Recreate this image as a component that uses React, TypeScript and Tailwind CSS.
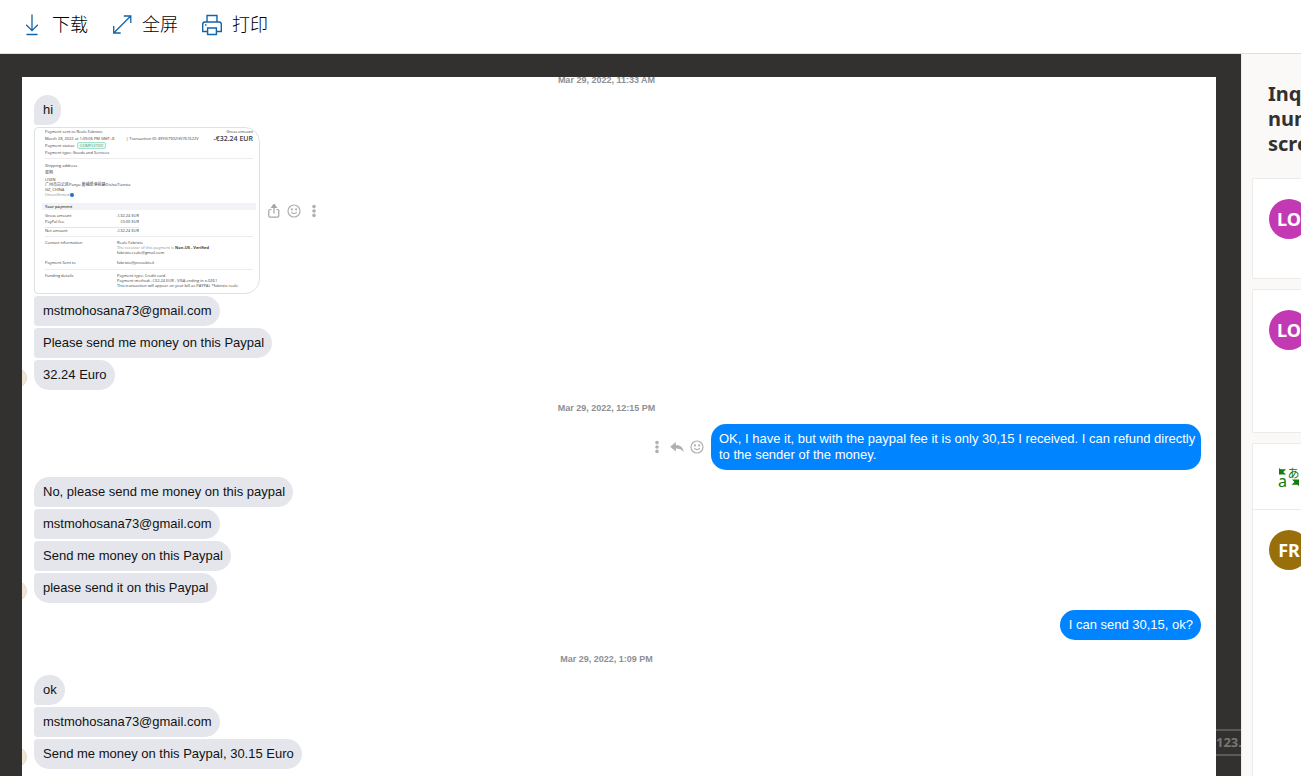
import type { ReactNode } from "react";
import { clsx } from "clsx";

type Position = "first" | "middle" | "last";

const DownloadIcon = () => (
  <svg className="h-6 w-6" viewBox="0 0 24 24" fill="none" stroke="#1264a8" strokeWidth="1.3">
    <path d="M12 2.5v16M6.2 12.8l5.8 5.8 5.8-5.8M6.5 22.5h11" />
  </svg>
);

const FullScreenIcon = () => (
  <svg className="h-6 w-6" viewBox="0 0 24 24" fill="none" stroke="#1264a8" strokeWidth="1.3">
    <path d="M4 20.7 20.5 4.2M13.8 4h7v7M3.7 14v7h7" />
  </svg>
);

const PrintIcon = () => (
  <svg className="h-6 w-6" viewBox="0 0 24 24" fill="none" stroke="#1264a8" strokeWidth="1.4">
    <path d="M7 10V3.5h10V10M7 19.5H2.7v-7.3Q2.7 10 4.9 10h14.2q2.2 0 2.2 2.2v7.3H17M7.6 16h8.8v6.5H7.6z" />
    <path d="M5 13h1.4" />
  </svg>
);

const SmileIcon = () => (
  <svg className="h-[14px] w-[14px]" viewBox="0 0 14 14" fill="none" stroke="#b0b0b2" strokeWidth="1.2">
    <circle cx="7" cy="7" r="6" />
    <path d="M4.2 8.2q2.8 3 5.6 0" />
    <circle cx="4.9" cy="5.4" r=".5" fill="#b0b0b2" />
    <circle cx="9.1" cy="5.4" r=".5" fill="#b0b0b2" />
  </svg>
);

const DotsIcon = () => (
  <svg className="h-[14px] w-[14px]" viewBox="0 0 14 14" fill="#b0b0b2">
    <circle cx="7" cy="2.6" r="1.8" />
    <circle cx="7" cy="7" r="1.8" />
    <circle cx="7" cy="11.4" r="1.8" />
  </svg>
);

const ShareIcon = () => (
  <svg className="h-[14px] w-[14px]" viewBox="0 0 14 14" fill="none" stroke="#a5a5a8" strokeWidth="1.2">
    <path d="M4.5 5.5H3q-1.2 0-1.2 1.2V12q0 1.2 1.2 1.2h7.6q1.2 0 1.2-1.2V6.7q0-1.2-1.2-1.2H9.5M7 9.5V2" />
    <path d="M7 .2 9.2 3.4H4.8z" fill="#a5a5a8" />
  </svg>
);

const ReplyIcon = () => (
  <svg className="h-[14px] w-[14px]" viewBox="0 0 14 14" fill="#b0b0b2">
    <path d="M5.8 2v3c5 .2 7.6 2.8 8 7.2-1.9-2.7-4.3-3.6-8-3.6v3L.2 6.8z" />
  </svg>
);

const TranslateIcon = () => (
  <svg className="h-6 w-6" viewBox="0 0 24 24" fill="#107c10">
    <text x="1" y="21.5" fontSize="16" fontFamily="Noto Sans, sans-serif">a</text>
    <text x="10.5" y="12.5" fontSize="12" fontFamily="Noto Sans CJK JP, sans-serif">あ</text>
    <path d="M2 3l1.6 1.3H9L6.3 7 9 9.5H2z" />
    <path d="M22 21l-1.6-1.3H14.5l3-2.7-2.5-2.5h7z" />
  </svg>
);

const ToolbarButton = ({ icon, label }: { icon: ReactNode; label: string }) => (
  <button className="flex items-center gap-2 text-lg leading-6 font-light text-black">
    {icon}
    {label}
  </button>
);

const DateLine = ({ children }: { children: ReactNode }) => (
  <p className="pr-[22px] text-center text-[9px] leading-4 font-bold text-[#8d9095]">{children}</p>
);

const Bubble = ({ position, children }: { position: Position; children: ReactNode }) => (
  <p
    className={clsx(
      "w-fit rounded-[15px] bg-[#e4e6eb] pr-2 pl-[9px] text-[13px] leading-[30px] text-[#111315]",
      position !== "first" && "rounded-tl-[4px]",
      position !== "last" && "rounded-bl-[4px]"
    )}
  >
    {children}
  </p>
);

const ReceivedGroup = ({ children }: { children: ReactNode }) => (
  <div className="relative flex flex-col gap-[2px]">
    {children}
    <span className="absolute bottom-[2px] -left-[27px] h-5 w-5 rounded-full border border-[#e3d9c8] bg-[#efe6d8]" />
  </div>
);

const IconButton = ({ label, children }: { label: string; children: ReactNode }) => (
  <button aria-label={label} title={label}>
    {children}
  </button>
);

const Row = ({ label, children }: { label?: string; children?: ReactNode }) => (
  <div className="flex leading-[5px]">
    <span className="w-[72px]">{label}</span>
    <span>{children}</span>
  </div>
);

const AmountRow = ({ label, amount }: { label: string; amount: string }) => (
  <div className="flex leading-[6px]">
    <span className="w-[60px]">{label}</span>
    <span className="w-[34px] text-right">{amount}</span>
  </div>
);

/* Receipt attached to the conversation, shown as a thumbnail */
const Receipt = () => (
  <div className="w-[226px] overflow-hidden rounded-[15px] rounded-l-[4px] border border-[#e0e1e4] bg-white pr-[6px] pb-[5px] pl-[10px] font-['Open_Sans','Noto_Sans_CJK_SC',sans-serif] text-[4px] whitespace-nowrap text-[#3a3c40]">
    <div className="flex justify-between border-b border-[#ececee] pb-[2px] leading-[7px]">
      <div>
        <p>Payment sent to Reale Fabrizio</p>
        <p className="flex">
          <span className="w-[81px]">March 28, 2022 at 1:09:06 PM GMT+8</span>
          <span>| Transaction ID: 8YH57902HV761622V</span>
        </p>
        <p className="flex items-center">
          Payment status:
          <span className="ml-[2px] rounded-[2px] border border-[#a5e2cb] bg-[#e6f8f0] px-[2px] leading-[5px] text-[#4d9c80]">
            COMPLETED
          </span>
        </p>
        <p>Payment type: Goods and Services</p>
      </div>
      <div className="text-right">
        <p>Gross amount</p>
        <p className="text-[7px] font-semibold">-€32.24 EUR</p>
      </div>
    </div>
    <div className="pt-[3px]">
      <p className="leading-[7px]">Shipping address</p>
      <p className="leading-[7px]">張明</p>
      <div className="pt-px leading-[5px]">
        <p>LISEN</p>
        <p>广州市白云区Panyu 黄埔新港前路DishuiTianxia</p>
        <p>GZ, CHINA</p>
        <p className="flex items-center text-[#8a8d91]">
          Unconfirmed <span className="h-1 w-1 rounded-full bg-[#1872bd]" />
        </p>
      </div>
    </div>
    <p className="-mx-[3px] mt-[6px] bg-[#f2f3f7] px-[3px] leading-[7px] font-semibold">Your payment</p>
    <div className="border-b border-[#ececee] pt-[3px] pb-[2px]">
      <AmountRow label="Gross amount" amount="-€32.24 EUR" />
      <AmountRow label="PayPal fee" amount="€0.00 EUR" />
      <div className="mt-[2px] w-[94px] border-t border-[#e4e4e6]" />
      <AmountRow label="Net amount" amount="-€32.24 EUR" />
    </div>
    <div className="border-b border-[#ececee] pt-[3px] pb-1">
      <Row label="Contact information">Reale Fabrizio</Row>
      <Row>
        <span className="text-[#8a8d91]">The receiver of this payment is</span> <b>Non-US - Verified</b>
      </Row>
      <Row>fabrizio.reale@gmail.com</Row>
      <div className="pt-[5px]">
        <Row label="Payment Sent to">fabrizio@provobis.it</Row>
      </div>
    </div>
    <div className="pt-[3px]">
      <Row label="Funding details">Payment type: Credit card</Row>
      <Row>Payment method: -€32.24 EUR - VISA ending in x-0261</Row>
      <Row>This transaction will appear on your bill as PAYPAL *fabrizio reale</Row>
    </div>
  </div>
);

const Avatar = ({ initials, className }: { initials: string; className: string }) => (
  <span className={clsx("flex h-10 w-10 items-center justify-center rounded-full text-lg font-bold text-white", className)}>
    {initials}
  </span>
);

const Sidebar = () => (
  <aside className="w-[60px] shrink-0 overflow-hidden border-l border-[#edebe9] bg-[#faf9f8]">
    <div className="flex w-[320px] flex-col gap-[10px] pl-[10px]">
      <h2 className="pt-[27px] pb-3 pl-4 text-xl leading-[25px] font-bold text-[#323130]">
        Inq
        <br />
        num
        <br />
        scre
      </h2>
      <section className="h-[101px] rounded-[2px] border border-[#edebe9] bg-white px-4 py-5">
        <Avatar initials="LO" className="bg-[#c239b3]" />
      </section>
      <section className="h-36 rounded-[2px] border border-[#edebe9] bg-white px-4 py-5">
        <Avatar initials="LO" className="bg-[#c239b3]" />
      </section>
      <section className="h-96 rounded-[2px] border border-[#edebe9] bg-white">
        <div className="flex h-[66px] items-center border-b border-[#edebe9] px-6">
          <TranslateIcon />
        </div>
        <div className="px-4 py-5">
          <Avatar initials="FR" className="bg-[#986f0b]" />
        </div>
      </section>
    </div>
  </aside>
);

const Conversation = () => (
  <div className="min-w-0 flex-1 overflow-hidden bg-white pr-[15px] pl-3 font-['Liberation_Sans',Arial,sans-serif]">
    <div className="-mt-[5px]">
      <DateLine>Mar 29, 2022, 11:33 AM</DateLine>
    </div>
    <div className="mt-[7px]">
      <ReceivedGroup>
        <Bubble position="first">hi</Bubble>
        <div className="flex items-center gap-[7px]">
          <Receipt />
          <div className="flex items-center gap-[6px]">
            <IconButton label="Share"><ShareIcon /></IconButton>
            <IconButton label="React"><SmileIcon /></IconButton>
            <IconButton label="More"><DotsIcon /></IconButton>
          </div>
        </div>
        <Bubble position="middle">mstmohosana73@gmail.com</Bubble>
        <Bubble position="middle">Please send me money on this Paypal</Bubble>
        <Bubble position="last">32.24 Euro</Bubble>
      </ReceivedGroup>
    </div>
    <div className="mt-[10px] mb-2">
      <DateLine>Mar 29, 2022, 12:15 PM</DateLine>
    </div>
    <div className="flex items-center justify-end gap-[7px]">
      <div className="flex items-center gap-[6px]">
        <IconButton label="More"><DotsIcon /></IconButton>
        <IconButton label="Reply"><ReplyIcon /></IconButton>
        <IconButton label="React"><SmileIcon /></IconButton>
      </div>
      <p className="max-w-[490px] rounded-[15px] bg-[#0084ff] py-[7px] pr-1 pl-2 text-[13px] leading-4 text-white">
        OK, I have it, but with the paypal fee it is only 30,15 I received. I can refund directly to the sender of the
        money.
      </p>
    </div>
    <div className="mt-[7px]">
      <ReceivedGroup>
        <Bubble position="first">No, please send me money on this paypal</Bubble>
        <Bubble position="middle">mstmohosana73@gmail.com</Bubble>
        <Bubble position="middle">Send me money on this Paypal</Bubble>
        <Bubble position="last">please send it on this Paypal</Bubble>
      </ReceivedGroup>
    </div>
    <div className="mt-[7px] flex justify-end">
      <p className="rounded-[15px] bg-[#0084ff] pr-2 pl-[9px] text-[13px] leading-[30px] text-white">I can send 30,15, ok?</p>
    </div>
    <div className="mt-[11px] mb-2">
      <DateLine>Mar 29, 2022, 1:09 PM</DateLine>
    </div>
    <ReceivedGroup>
      <Bubble position="first">ok</Bubble>
      <Bubble position="middle">mstmohosana73@gmail.com</Bubble>
      <Bubble position="last">Send me money on this Paypal, 30.15 Euro</Bubble>
    </ReceivedGroup>
  </div>
);

const App = () => (
  <div className="flex h-screen flex-col overflow-hidden bg-white font-['Noto_Sans','Noto_Sans_CJK_SC',sans-serif]">
    <header className="flex shrink-0 gap-[22px] border-b border-[#e1dfdd] px-5 pt-3 pb-[17px]">
      <ToolbarButton icon={<DownloadIcon />} label="下载" />
      <ToolbarButton icon={<FullScreenIcon />} label="全屏" />
      <ToolbarButton icon={<PrintIcon />} label="打印" />
    </header>
    <div className="flex min-h-0 flex-1">
      <main className="relative flex min-w-0 flex-1 bg-[#323130] pt-[23px] pr-[25px] pl-[22px]">
        <Conversation />
        {/* Watermark strip */}
        <span className="absolute right-0 bottom-[20px] w-[25px] overflow-hidden border-y-2 border-[#5b5a59] text-[13px] leading-[23px] font-bold text-[#777675]">
          123.
        </span>
      </main>
      <Sidebar />
    </div>
  </div>
);

export default App;
